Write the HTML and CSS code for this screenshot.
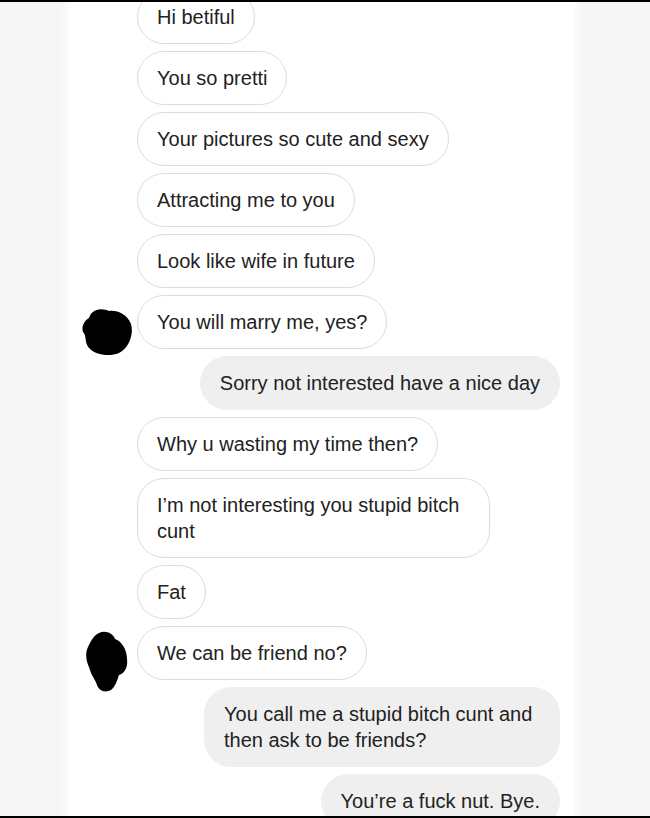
FILE: index.html
```html
<!DOCTYPE html>
<html>
<head>
<meta charset="utf-8">
<link rel="stylesheet" href="styles.css">
</head>
<body>
<div class="frame">
  <div class="side side-left"></div>
  <div class="thread">
    <div class="row in first"><div class="slot"></div><div class="bubble">Hi betiful</div></div>
    <div class="row in"><div class="slot"></div><div class="bubble">You so pretti</div></div>
    <div class="row in"><div class="slot"></div><div class="bubble">Your pictures so cute and sexy</div></div>
    <div class="row in"><div class="slot"></div><div class="bubble">Attracting me to you</div></div>
    <div class="row in"><div class="slot"></div><div class="bubble">Look like wife in future</div></div>
    <div class="row in"><div class="slot"><svg class="blob blob1" width="52" height="48" viewBox="0 0 52 48"><path d="M12 4 C16 0 24 1 28 3 C36 2 46 6 50 16 C53 26 48 40 38 45 C28 49 14 47 8 40 C3 34 6 28 2 24 C0 18 4 12 8 10 C9 7 10 5 12 4 Z" fill="#000"/></svg></div><div class="bubble">You will marry me, yes?</div></div>
    <div class="row out"><div class="bubble">Sorry not interested have a nice day</div></div>
    <div class="row in"><div class="slot"></div><div class="bubble">Why u wasting my time then?</div></div>
    <div class="row in"><div class="slot"></div><div class="bubble wide">I’m not interesting you stupid bitch cunt</div></div>
    <div class="row in"><div class="slot"></div><div class="bubble">Fat</div></div>
    <div class="row in"><div class="slot"><svg class="blob blob2" width="44" height="62" viewBox="0 0 44 62"><path d="M14 2 C20 -1 28 2 30 8 C36 10 42 18 42 28 C43 36 40 42 34 44 C32 50 30 56 26 59 C20 62 14 60 12 54 C10 48 6 44 4 36 C1 30 0 22 3 16 C6 10 8 5 14 2 Z" fill="#000"/></svg></div><div class="bubble">We can be friend no?</div></div>
    <div class="row out"><div class="bubble wide-out">You call me a stupid bitch cunt and then ask to be friends?</div></div>
    <div class="row out"><div class="bubble">You’re a fuck nut. Bye.</div></div>
  </div>
  <div class="side side-right"></div>
</div>
</body>
</html>
```
FILE: styles.css
```css
* { box-sizing: border-box; }
html, body {
  margin: 0;
  padding: 0;
  background: #ffffff;
}
.frame {
  width: 650px;
  height: 818px;
  display: flex;
  overflow: hidden;
  border-top: 2px solid #000;
  border-bottom: 2px solid #000;
  background: #fff;
}
.side {
  flex: none;
  height: 100%;
}
.side-left {
  width: 70px;
  background: linear-gradient(to right, #f6f6f6 0, #f6f6f6 60px, #fcfcfc 70px);
}
.side-right {
  width: 75px;
  background: linear-gradient(to right, #fbfbfb 0, #f6f6f6 6px, #f6f6f6 100%);
}
.thread {
  flex: 1;
  display: flex;
  flex-direction: column;
  gap: 7px;
  padding-right: 15px;
  font-family: "Liberation Sans", Arial, sans-serif;
  font-size: 20px;
  color: #222222;
}
.row {
  display: flex;
  align-items: flex-end;
}
.row.first {
  margin-top: -12px;
}
.row.out {
  justify-content: flex-end;
}
.slot {
  flex: none;
  width: 67px;
  position: relative;
  align-self: stretch;
}
.bubble {
  line-height: 26px;
  padding: 13px 19px;
  border-radius: 27px;
  border: 1px solid #dcdcdc;
  background: #fff;
}
.row.out .bubble {
  background: #efefef;
  border-color: #efefef;
}
.bubble.wide {
  width: 353px;
}
.bubble.wide-out {
  width: 356px;
}
.blob {
  position: absolute;
  display: block;
}
.blob1 {
  left: 11px;
  bottom: -7px;
}
.blob2 {
  left: 15px;
  bottom: -13px;
}
```
